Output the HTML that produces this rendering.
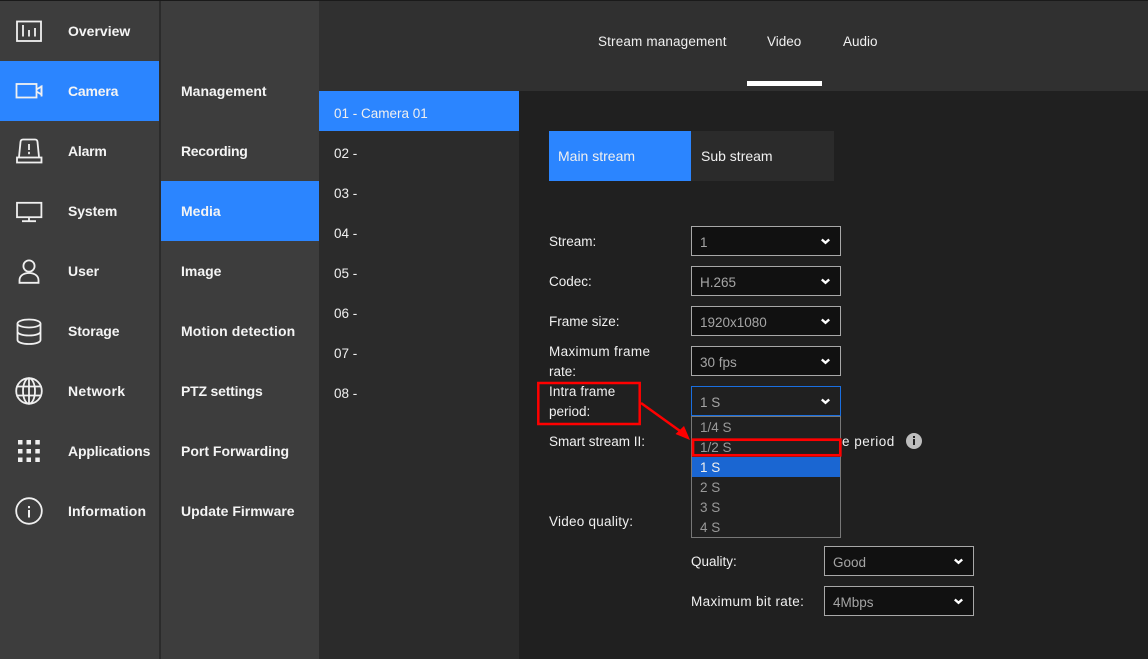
<!DOCTYPE html>
<html><head><meta charset="utf-8">
<style>
html,body{margin:0;padding:0;background:#202020}
#p{position:relative;width:1148px;height:659px;overflow:hidden;background:#202020;font-family:"Liberation Sans",sans-serif;font-size:13px;color:#f0f0f0}
#p div{position:absolute;white-space:nowrap}
.b{background:#2b85ff}
.n{font-weight:bold;font-size:14px;color:#f4f4f4;line-height:20px;height:20px}
.t{line-height:20px;height:20px;font-size:13.5px;margin-top:1px}
.s{box-sizing:border-box;height:30px;width:150px;border:1px solid #a8a8a8;background:#111;color:#a5a5a5;font-size:13.5px;line-height:30px;padding-left:8px}
.o{left:692px;width:148px;height:20px;line-height:21px;padding-left:8px;color:#999;font-size:13.5px;box-sizing:border-box}
svg{position:absolute;overflow:visible}
.i{fill:none;stroke:#f0f0f0;stroke-width:1.8}
.c{fill:none;stroke:#fff;stroke-width:2.4}
</style></head><body><div id="p">
<div style="left:0;top:0;width:159px;height:659px;background:#3d3d3d"></div>
<div style="left:159px;top:0;width:2px;height:659px;background:#2b2b2b"></div>
<div style="left:161px;top:0;width:158px;height:659px;background:#3d3d3d"></div>
<div style="left:319px;top:0;width:829px;height:91px;background:#303030"></div>
<div style="left:319px;top:91px;width:200px;height:568px;background:#2b2b2b"></div>
<div style="left:0;top:0;width:1148px;height:1px;background:#1a1a1a"></div>
<div class="b" style="left:0;top:61px;width:159px;height:60px"></div>
<div class="b" style="left:161px;top:181px;width:158px;height:60px"></div>
<div class="b" style="left:319px;top:91px;width:200px;height:40px"></div>
<div style="left:747px;top:81px;width:75px;height:5px;background:#fff"></div>

<svg style="left:0;top:0" width="60" height="540">
<g class="i">
<rect x="17" y="21.500" width="24" height="19.500"/>
<path d="M23 25v11.500M29 30v6.500M35 28v8.500"/>
<rect x="16.500" y="84" width="20" height="13.500"/>
<path d="M36.500 89.500l5-3v8l-5-3"/><path d="M41.500 85.500v11"/>
<path d="M19 157l1.500-15q.2-2.500 2.500-2.500h12q2.300 0 2.500 2.500l1.500 15"/><rect x="17" y="157.500" width="24.500" height="5"/>
<path d="M29 144v6"/><path d="M29 151.800v2.400"/>
<rect x="17" y="202.800" width="24.400" height="14.400"/><path d="M29 217v3.500M22 221.200h14"/>
<circle cx="29" cy="266" r="5.600"/><path d="M19.500 282.800v-2.500c0-4.500 4-7.300 9.500-7.300s9.500 2.800 9.500 7.300v2.500z"/>
<ellipse cx="29" cy="323.500" rx="11.500" ry="4"/><path d="M17.500 323.500v16.500c0 2.300 5 4 11.500 4s11.500-1.700 11.500-4v-16.500M17.500 331.500c0 2.300 5 4 11.500 4s11.500-1.700 11.500-4"/>
<circle cx="29" cy="391" r="12.800"/><ellipse cx="29" cy="391" rx="6" ry="12.800"/><path d="M29 378.200v25.600M17.500 386.500h23M17.500 395.500h23"/>
<circle cx="29" cy="511" r="12.800"/>
</g>
<path d="M18 440h4.500v4.500h-4.500zM26.500 440h4.500v4.500h-4.500zM35.300 440h4.500v4.500h-4.500zM18 449h4.500v4.500h-4.500zM26.500 449h4.500v4.500h-4.500zM35.300 449h4.500v4.500h-4.500zM18 457.500h4.500v4.500h-4.500zM26.500 457.500h4.500v4.500h-4.500zM35.300 457.500h4.500v4.500h-4.500z" fill="#f0f0f0"/>
<rect x="28" y="510" width="2" height="7.500" fill="#f0f0f0"/><rect x="28" y="506" width="2" height="2.200" fill="#f0f0f0"/>
</svg>

<div class="n" style="left:68px;top:21px">Overview</div>
<div class="n" style="left:68px;top:81px;letter-spacing:-.2px">Camera</div>
<div class="n" style="left:68px;top:141px;letter-spacing:-.2px">Alarm</div>
<div class="n" style="left:68px;top:201px;letter-spacing:-.1px">System</div>
<div class="n" style="left:68px;top:261px">User</div>
<div class="n" style="left:68px;top:321px;letter-spacing:-.1px">Storage</div>
<div class="n" style="left:68px;top:381px;letter-spacing:.3px">Network</div>
<div class="n" style="left:68px;top:441px;letter-spacing:-.15px">Applications</div>
<div class="n" style="left:68px;top:501px;letter-spacing:.1px">Information</div>

<div class="n" style="left:181px;top:81px">Management</div>
<div class="n" style="left:181px;top:141px;letter-spacing:-.3px">Recording</div>
<div class="n" style="left:181px;top:201px">Media</div>
<div class="n" style="left:181px;top:261px">Image</div>
<div class="n" style="left:181px;top:321px;letter-spacing:.15px">Motion detection</div>
<div class="n" style="left:181px;top:381px;letter-spacing:-.2px">PTZ settings</div>
<div class="n" style="left:181px;top:441px">Port Forwarding</div>
<div class="n" style="left:181px;top:501px">Update Firmware</div>

<div class="t" style="left:598px;top:31px;letter-spacing:.15px">Stream management</div>
<div class="t" style="left:767px;top:31px">Video</div>
<div class="t" style="left:843px;top:31px">Audio</div>

<div class="t" style="left:334px;top:103px">01 - Camera 01</div>
<div class="t" style="left:334px;top:143px">02 -</div>
<div class="t" style="left:334px;top:183px">03 -</div>
<div class="t" style="left:334px;top:223px">04 -</div>
<div class="t" style="left:334px;top:263px">05 -</div>
<div class="t" style="left:334px;top:303px">06 -</div>
<div class="t" style="left:334px;top:343px">07 -</div>
<div class="t" style="left:334px;top:383px">08 -</div>

<div class="b" style="left:549px;top:131px;width:142px;height:50px"></div>
<div style="left:691px;top:131px;width:143px;height:50px;background:#2b2b2b"></div>
<div style="left:558px;top:146px;line-height:20px;font-size:14px">Main stream</div>
<div style="left:701px;top:146px;line-height:20px;font-size:14px">Sub stream</div>

<div class="t" style="left:549px;top:231px">Stream:</div>
<div class="t" style="left:549px;top:271px">Codec:</div>
<div class="t" style="left:549px;top:311px">Frame size:</div>
<div class="t" style="left:549px;top:341px;letter-spacing:.35px">Maximum frame</div>
<div class="t" style="left:549px;top:361px">rate:</div>
<div class="t" style="left:549px;top:381px;letter-spacing:.1px">Intra frame</div>
<div class="t" style="left:549px;top:401px">period:</div>
<div class="t" style="left:549px;top:431px">Smart stream II:</div>
<div class="t" style="left:549px;top:511px;letter-spacing:.25px">Video quality:</div>
<div class="t" style="left:691px;top:551px">Quality:</div>
<div class="t" style="left:691px;top:591px;letter-spacing:.35px">Maximum bit rate:</div>

<div class="s" style="left:691px;top:226px;line-height:31px">1</div>
<div class="s" style="left:691px;top:266px;line-height:31px">H.265</div>
<div class="s" style="left:691px;top:306px;line-height:31px">1920x1080</div>
<div class="s" style="left:691px;top:346px;line-height:31px">30 fps</div>
<div class="s" style="left:691px;top:386px;line-height:31px;background:#202020;border-color:#1a6fe0">1 S</div>
<div class="s" style="left:824px;top:546px;line-height:31px">Good</div>
<div class="s" style="left:824px;top:586px;line-height:31px">4Mbps</div>

<div class="t" style="left:842px;top:431px;letter-spacing:.5px">e period</div>
<div style="left:906px;top:433px;width:16px;height:16px;border-radius:50%;background:#bdbdbd"></div>
<div style="left:913px;top:436px;width:2px;height:2px;background:#202020"></div>
<div style="left:913px;top:439px;width:2px;height:6px;background:#202020"></div>

<div style="left:691px;top:416px;width:150px;height:122px;box-sizing:border-box;border:1px solid #777;background:#202020"></div>
<div class="o" style="top:417px">1/4 S</div>
<div class="o" style="top:437px">1/2 S</div>
<div class="o" style="top:457px;background:#1a66d2;color:#f0f0f0">1 S</div>
<div class="o" style="top:477px">2 S</div>
<div class="o" style="top:497px">3 S</div>
<div class="o" style="top:517px">4 S</div>

<svg style="left:0;top:0" width="1148" height="659">
<path class="c" d="M821.800 239.500l3.700 3.300 3.700-3.300M821.800 279.500l3.700 3.300 3.700-3.300M821.800 319.500l3.700 3.300 3.700-3.300M821.800 359.500l3.700 3.300 3.700-3.300M821.800 399.500l3.700 3.300 3.700-3.300M954.800 559.500l3.700 3.300 3.700-3.300M954.800 599.500l3.700 3.300 3.700-3.300"/>
<rect x="538.300" y="383" width="101.400" height="41" fill="none" stroke="#f00" stroke-width="2.500"/>
<rect x="693" y="439.700" width="147.300" height="15.600" fill="none" stroke="#f00" stroke-width="2.700"/>
<path d="M641 403L680 431" stroke="#f00" stroke-width="2.500" fill="none"/>
<path d="M690 440L675.500 434L684 426Z" fill="#f00"/>
</svg>
</div></body></html>
